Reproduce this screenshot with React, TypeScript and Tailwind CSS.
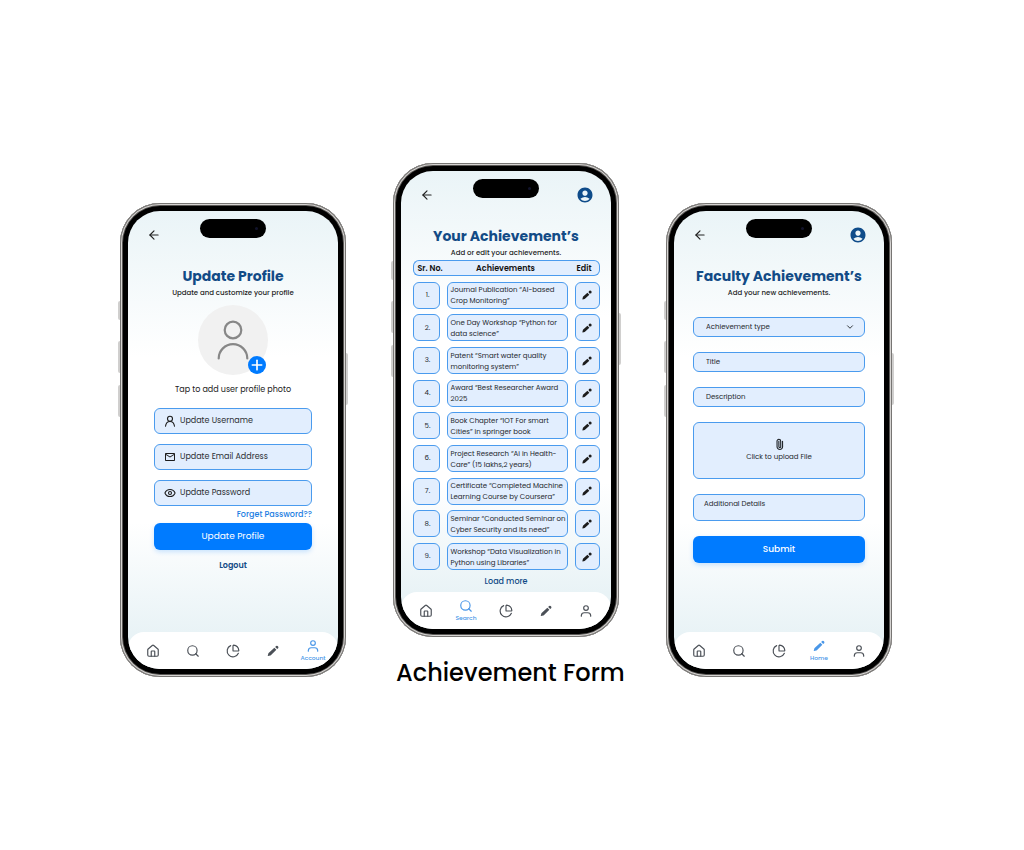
import React from "react";
import { ArrowLeft, ChevronDown, ChartPie, Eye, House, Paperclip, Plus, Search } from "lucide-react";
import { MdAccountCircle, MdOutlineEmail } from "react-icons/md";

type IconProps = { className?: string };

function UserOutline({ className = "size-4" }: IconProps) {
  return (
    <svg viewBox="0 0 24 24" className={className} fill="none" stroke="currentColor" strokeWidth="2" strokeLinecap="round" aria-hidden="true">
      <circle cx="12" cy="7" r="4" />
      <path d="M4 21v-1.500a5 5 0 0 1 5-4.500h6a5 5 0 0 1 5 4.500v1.500" />
    </svg>
  );
}

function UserThin({ className = "size-4" }: IconProps) {
  return (
    <svg viewBox="0 0 24 24" className={className} fill="none" stroke="currentColor" strokeWidth="2.2" strokeLinecap="round" aria-hidden="true">
      <circle cx="12" cy="7.500" r="5" />
      <path d="M3 22.500c.8-6 4.200-9.500 9-9.500s8.200 3.500 9 9.500" />
    </svg>
  );
}

function Mail({ className = "size-4" }: IconProps) {
  return <MdOutlineEmail className={className} />;
}

function EyeOutline({ className = "size-4" }: IconProps) {
  return <Eye className={className} strokeWidth={2.2} />;
}

function Pencil({ className = "size-4" }: IconProps) {
  return (
    <svg viewBox="0 0 24 24" className={className} fill="currentColor" aria-hidden="true">
      <path d="m14.300 6.400 3.500 3.500L8.300 19.100c-.3.300-.7.500-1.100.600l-3.600.9c-.400.1-.7-.200-.6-.6l.9-3.500c.1-.4.300-.8.600-1.100z" />
      <path d="m15.700 5.100 1.600-1.500a2.500 2.500 0 0 1 3.500 3.500l-1.600 1.500z" />
    </svg>
  );
}

function RoundPencil({ className = "size-4" }: IconProps) {
  return (
    <svg viewBox="0 0 24 24" className={className} fill="currentColor" aria-hidden="true">
      <path d="m12.800 7.400 3.900 3.900-8.200 7.900c-.4.400-.8.600-1.300.7l-3.700.9c-.4.100-.8-.200-.7-.6l.9-3.700c.1-.5.400-1 .7-1.300z" />
      <circle cx="18.300" cy="5.900" r="3" />
    </svg>
  );
}

const navItems = [
  { id: "home", icon: House },
  { id: "search", icon: Search },
  { id: "reports", icon: ChartPie },
  { id: "edit", icon: Pencil },
  { id: "account", icon: UserOutline },
];

function BottomNav({ active, label }: { active: string; label: string }) {
  return (
    <nav className="mt-auto grid h-[37px] grid-cols-5 rounded-t-2xl bg-white px-[5px]">
      {navItems.map(({ id, icon: Icon }) => (
        <a
          key={id}
          href={"#" + id}
          aria-label={id}
          className={
            id === active
              ? "flex flex-col items-center justify-center text-[#4a97e8]"
              : "flex flex-col items-center justify-center text-[#4b5057]"
          }
        >
          <Icon className="size-[14px]" />
          {id === active && <span className="text-[6px] leading-[10px] font-medium">{label}</span>}
        </a>
      ))}
    </nav>
  );
}

type PhoneProps = {
  title: string;
  subtitle: string;
  active: string;
  activeLabel: string;
  showAccount?: boolean;
  children: React.ReactNode;
};

function Phone({ title, subtitle, active, activeLabel, showAccount = false, children }: PhoneProps) {
  return (
    <section className="relative flex min-h-[474px] rounded-[40px] bg-black p-2 shadow-[inset_0_0_0_1px_#777573,inset_0_0_0_2px_#d6d4d2,inset_0_0_0_3px_#5a5856]">
      <span className="absolute top-[98px] -left-[2px] h-[19px] w-[2px] rounded-l-sm bg-[#d0cfce]" />
      <span className="absolute top-[138px] -left-[2px] h-8 w-[2px] rounded-l-sm bg-[#d0cfce]" />
      <span className="absolute top-[182px] -left-[2px] h-8 w-[2px] rounded-l-sm bg-[#d0cfce]" />
      <span className="absolute top-[150px] -right-[2px] h-[52px] w-[2px] rounded-r-sm bg-[#d0cfce]" />
      <div className="relative flex w-full flex-col overflow-hidden rounded-[32px] bg-[linear-gradient(to_bottom,#eaf4f7,#ffffff_32%,#ffffff_68%,#e9f3f6_92%)]">
        <div className="absolute top-2 left-1/2 flex h-[19px] w-[66px] -translate-x-1/2 items-center justify-end rounded-full bg-black pr-2">
          <span className="size-[3px] rounded-full bg-[#11132b]" />
        </div>
        <header className="flex h-[33px] items-center justify-between pt-[15px] pr-[17px] pl-[19px]">
          <button type="button" aria-label="Back" className="text-[#222]">
            <ArrowLeft className="size-[14px]" />
          </button>
          {showAccount && (
            <button type="button" aria-label="Account" className="text-[#0f4c8a]">
              <MdAccountCircle className="size-[18px]" />
            </button>
          )}
        </header>
        <h2 className="mt-[22px] text-center text-[14px] leading-5 font-bold whitespace-nowrap text-[#124b86]">{title}</h2>
        <p className="mt-px text-center text-[7px] leading-3 font-medium text-[#1c1c1c]">{subtitle}</p>
        {children}
        <BottomNav active={active} label={activeLabel} />
      </div>
    </section>
  );
}

const profileFields = [
  { id: "username", type: "text", label: "Update Username", icon: UserThin },
  { id: "email", type: "email", label: "Update Email Address", icon: Mail },
  { id: "password", type: "password", label: "Update Password", icon: EyeOutline },
];

function ProfileScreen() {
  return (
    <Phone title="Update Profile" subtitle="Update and customize your profile" active="account" activeLabel="Account">
      <div className="relative mx-auto mt-[6px] size-[70px] rounded-full bg-[#f1f1f1]">
        <svg viewBox="0 0 70 70" className="size-full" fill="none" stroke="#878787" strokeWidth="2.2" strokeLinecap="round" aria-hidden="true">
          <circle cx="35" cy="25" r="8.300" />
          <path d="M20.700 53.500a14.300 14.300 0 0 1 28.600 0" />
        </svg>
        <button type="button" aria-label="Add photo" className="absolute right-[2px] bottom-[1px] flex size-[18px] items-center justify-center rounded-full bg-[#007bff] text-white">
          <Plus className="size-4" strokeWidth={2.500} />
        </button>
      </div>
      <p className="mt-[9px] text-center text-[8px] leading-3 text-[#222]">Tap to add user profile photo</p>
      <form className="mt-3 flex flex-col px-[26px]">
        <div className="flex flex-col gap-[10px]">
          {profileFields.map(({ id, type, label, icon: Icon }) => (
            <label key={id} className="flex h-[26px] items-center gap-[4px] rounded-md border border-[#4a9bee] bg-[#e2eefe] pl-[9px] text-[#1d1d1d]">
              <Icon className="size-[12px] shrink-0" />
              <input type={type} aria-label={label} placeholder={label} className="w-full min-w-0 bg-transparent text-[8px] outline-none placeholder:text-[#2c2f33]" />
            </label>
          ))}
        </div>
        <a href="#forgot" className="mt-[3px] self-end text-[8px] leading-3 font-medium text-[#1b7de2]">Forget Password??</a>
        <button type="button" className="mt-[2px] h-[27px] rounded-md bg-[#007bff] text-[9px] text-white shadow-[0_2px_5px_#007bff33]">Update Profile</button>
        <a href="#logout" className="mt-[10px] self-center text-[8px] leading-3 font-semibold text-[#124b86]">Logout</a>
      </form>
    </Phone>
  );
}

const achievements = [
  ["Journal Publication “AI-based", "Crop Monitoring”"],
  ["One Day Workshop “Python for", "data science”"],
  ["Patent “Smart water quality", "monitoring system”"],
  ["Award “Best Researcher Award", "2025"],
  ["Book Chapter “IOT For smart", "Cities” in springer book"],
  ["Project Research “Ai in Health-", "Care” (15 lakhs,2 years)"],
  ["Certificate “Completed Machine", "Learning Course by Coursera”"],
  ["Seminar “Conducted Seminar on", "Cyber Security and its need”"],
  ["Workshop “Data Visualization in", "Python using Libraries”"],
];

function AchievementsScreen() {
  return (
    <Phone title="Your Achievement’s" subtitle="Add or edit your achievements." active="search" activeLabel="Search" showAccount>
      <table className="mx-auto mt-[1px] h-[313px] w-[187px] table-fixed border-separate border-spacing-0 text-[7px] text-[#24282d]">
        <thead>
          <tr className="h-[19px] text-[8px] leading-4 text-[#111]">
            <th className="w-[34px] p-0 pb-[3px] font-semibold whitespace-nowrap">
              <div className="h-4 rounded-l-md border border-r-0 border-[#4a9bee] bg-[#e2eefe] pl-1 text-left">Sr. No.</div>
            </th>
            <th className="p-0 pb-[3px] font-semibold">
              <div className="h-4 border-y border-[#4a9bee] bg-[#e2eefe] pr-[10px]">Achievements</div>
            </th>
            <th className="w-[25px] p-0 pb-[3px] font-semibold">
              <div className="h-4 rounded-r-md border border-l-0 border-[#4a9bee] bg-[#e2eefe] pr-[5px]">Edit</div>
            </th>
          </tr>
        </thead>
        <tbody>
          {achievements.map(([first, second], index) => (
            <tr key={first}>
              <td className="p-0 pr-[7px]">
                <div className="flex h-[27px] items-center justify-center rounded-md border border-[#4a9bee] bg-[#e2eefe] pl-[3px]">{index + 1}.</div>
              </td>
              <td className="p-0 pr-[7px]">
                <div className="flex h-[27px] flex-col justify-center rounded-md border border-[#4a9bee] bg-[#e2eefe] pl-[3px] leading-[11px] whitespace-nowrap">
                  <span>{first}</span>
                  <span>{second}</span>
                </div>
              </td>
              <td className="p-0">
                <button type="button" aria-label={"Edit achievement " + (index + 1)} className="flex h-[27px] w-full items-center justify-center rounded-md border border-[#4a9bee] bg-[#e2eefe] text-[#1d1d1d]">
                  <RoundPencil className="size-3" />
                </button>
              </td>
            </tr>
          ))}
        </tbody>
      </table>
      <a href="#more" className="mt-[3px] self-center text-[8px] leading-3 font-medium text-[#124b86]">Load more</a>
    </Phone>
  );
}

function FacultyScreen() {
  return (
    <Phone title="Faculty Achievement’s" subtitle="Add your new achievements." active="edit" activeLabel="Home" showAccount>
      <form className="mt-[18px] flex flex-col gap-[15px] px-[19px] text-[7px] text-[#24282d]">
        <div className="relative">
          <select aria-label="Achievement type" className="block h-5 w-full appearance-none rounded-md border border-[#4a9bee] bg-[#e2eefe] pl-3 outline-none">
            <option>Achievement type</option>
          </select>
          <ChevronDown className="pointer-events-none absolute top-[5px] right-[10px] size-[10px]" strokeWidth={2.2} />
        </div>
        <input aria-label="Title" placeholder="Title" className="h-5 rounded-md border border-[#4a9bee] bg-[#e2eefe] pl-3 outline-none placeholder:text-[#24282d]" />
        <input aria-label="Description" placeholder="Description" className="h-5 rounded-md border border-[#4a9bee] bg-[#e2eefe] pl-3 outline-none placeholder:text-[#24282d]" />
        <button type="button" className="flex h-[57px] flex-col items-center justify-center gap-px rounded-md border border-[#4a9bee] bg-[#e2eefe] pt-px">
          <Paperclip className="size-[11px] -rotate-45" strokeWidth={2.500} />
          <span className="leading-3">Click to upload File</span>
        </button>
        <textarea aria-label="Additional Details" placeholder="Additional Details" className="h-[27px] resize-none rounded-md border border-[#4a9bee] bg-[#e2eefe] pt-1 pl-[10px] leading-[10px] outline-none placeholder:text-[#24282d]" />
        <button type="button" className="h-[27px] rounded-md bg-[#007bff] text-[9px] font-medium text-white shadow-[0_2px_5px_#007bff33]">Submit</button>
      </form>
    </Phone>
  );
}

export default function App() {
  return (
    <main className="min-h-screen bg-white px-4 pt-[163px] pb-10 font-['Poppins','Inter',sans-serif] md:pr-7">
      <div className="mx-auto grid max-w-[226px] grid-cols-1 items-start gap-[47px] md:max-w-[772px] md:grid-cols-3">
        <div className="md:pt-10">
          <ProfileScreen />
        </div>
        <div>
          <AchievementsScreen />
          <h1 className="mt-5 pl-[3px] text-2xl font-medium whitespace-nowrap text-black">Achievement Form</h1>
        </div>
        <div className="md:pt-10">
          <FacultyScreen />
        </div>
      </div>
    </main>
  );
}
